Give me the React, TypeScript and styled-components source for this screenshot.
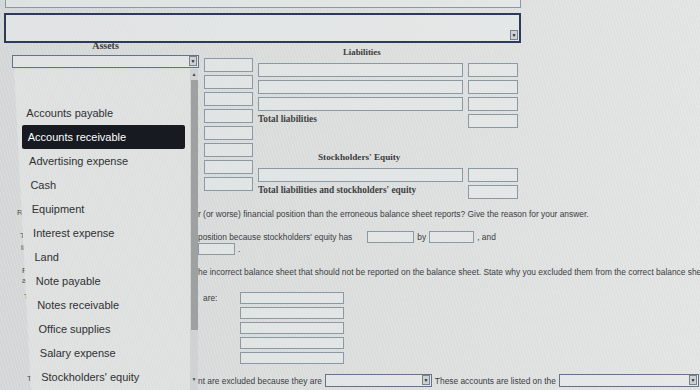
import styled, { createGlobalStyle } from 'styled-components'

const GlobalStyle = createGlobalStyle`
  html, body {
    margin: 0;
    padding: 0;
  }
  body {
    width: 700px;
    height: 390px;
    overflow: hidden;
    background: linear-gradient(90deg, #d3d6d6 0%, #d9dcdb 45%, #e1e3e2 100%);
    font-family: 'Liberation Sans', Arial, sans-serif;
    color: #35383a;
  }
`

const Page = styled.div`
  position: relative;
  width: 700px;
  height: 390px;
  overflow: hidden;
  box-sizing: border-box;
  padding-left: 4px;
  background-image: repeating-linear-gradient(
    74deg,
    rgba(255, 255, 255, 0.16) 0 1px,
    transparent 1px 3px
  );
`

const Field = styled.div<{ $w?: number; $h?: number }>`
  box-sizing: border-box;
  flex: none;
  width: ${(p) => p.$w ?? 50}px;
  height: ${(p) => p.$h ?? 14}px;
  border: 1px solid #8a99a3;
  background: rgba(232, 235, 235, 0.55);
`

const TopInput = styled(Field)`
  margin: -14px 0 0 1px;
`

const Select = styled.div<{ $w: number; $h: number; $thick?: boolean }>`
  box-sizing: border-box;
  flex: none;
  display: flex;
  justify-content: flex-end;
  align-items: flex-end;
  width: ${(p) => p.$w}px;
  height: ${(p) => p.$h}px;
  padding: 1px;
  border: ${(p) => (p.$thick ? '2px solid #2f3a5a' : '1px solid #66718a')};
  background: rgba(232, 235, 235, 0.6);
`

const TopSelect = styled(Select)`
  margin-top: 5px;
`

const Arrow = styled.span`
  box-sizing: border-box;
  width: 8px;
  height: 10px;
  display: flex;
  align-items: center;
  justify-content: center;
  background: #cdd1d4;
  border: 1px solid #7a8490;
  font-size: 5px;
  color: #1d1f22;
`

const Sheet = styled.div`
  display: grid;
  grid-template-columns: 187px 49px 261px;
  column-gap: 5px;
  margin-left: 8px;
  align-items: start;
`

const Column = styled.div`
  display: flex;
  flex-direction: column;
`

const ColHead = styled.div<{ $pad?: number; $top?: number; $size?: number; $h?: number }>`
  height: ${(p) => p.$h ?? 12}px;
  line-height: 11px;
  margin-top: ${(p) => p.$top ?? 0}px;
  padding-left: ${(p) => p.$pad ?? 0}px;
  text-align: ${(p) => (p.$pad === undefined ? 'center' : 'left')};
  font-family: 'Liberation Serif', 'Times New Roman', serif;
  font-weight: bold;
  font-size: ${(p) => p.$size ?? 9.2}px;
  color: #3a3c3e;
`

const Amounts = styled.div`
  display: flex;
  flex-direction: column;
  gap: 3px;
  padding-top: 15px;
`

const LiabRows = styled.div<{ $top: number }>`
  display: flex;
  flex-direction: column;
  gap: 3px;
  margin-top: ${(p) => p.$top}px;
`

const LiabRow = styled.div`
  display: flex;
  align-items: center;
  gap: 5px;
  height: 14px;
`

const TotalLabel = styled.span`
  width: 205px;
  margin-top: -4px;
  font-family: 'Liberation Serif', 'Times New Roman', serif;
  font-weight: bold;
  font-size: 9.3px;
  color: #3d3f41;
  white-space: nowrap;
`

const Questions = styled.div`
  display: flex;
  flex-direction: column;
  margin-top: 9px;
`

const QRow = styled.div<{ $top?: number }>`
  display: grid;
  grid-template-columns: 194px 1fr;
  align-items: start;
  margin-top: ${(p) => p.$top ?? 0}px;
`

const Lead = styled.div<{ $indent: number }>`
  padding-left: ${(p) => p.$indent}px;
  white-space: nowrap;
  font-size: 8px;
  line-height: 10px;
  color: #45484a;
`

const Body = styled.div`
  display: flex;
  align-items: center;
  gap: 3px;
  min-height: 12px;
  white-space: nowrap;
  font-size: 8.4px;
  color: #3a3d3f;
`

const Gap = styled.span<{ $w: number }>`
  width: ${(p) => p.$w}px;
  flex: none;
`

const AreLabel = styled.span`
  width: 39px;
  padding-left: 5px;
  box-sizing: border-box;
  align-self: flex-start;
  line-height: 12px;
`

const Stack = styled.div`
  display: flex;
  flex-direction: column;
  gap: 3px;
`

const DropList = styled.div`
  position: absolute;
  top: 69px;
  left: 14px;
  width: 184px;
  height: 321px;
  display: flex;
  background: #dde0df;
  background-image: repeating-linear-gradient(
    74deg,
    rgba(255, 255, 255, 0.14) 0 1px,
    transparent 1px 3px
  );
  clip-path: polygon(0 0, 100% 0, 100% 100%, 17px 100%);
`

const Options = styled.div`
  flex: 1;
  padding-top: 8px;
`

const Option = styled.div<{ $i: number; $active?: boolean }>`
  height: 24px;
  line-height: 24px;
  margin: 0 5px 0 8px;
  padding-left: ${(p) => 3 + p.$i * 1.35}px;
  border-radius: 2px;
  font-size: 11px;
  white-space: nowrap;
  color: ${(p) => (p.$active ? '#ffffff' : '#2f3133')};
  background: ${(p) => (p.$active ? '#171b21' : 'transparent')};
`

const Scroll = styled.div`
  width: 8px;
  display: flex;
  flex-direction: column;
  align-items: center;
  padding-bottom: 6px;
  background: #d0d3d3;
`

const ScrollBtn = styled.span`
  height: 10px;
  line-height: 10px;
  font-size: 5px;
  color: #4b4f53;
`

const Thumb = styled.div`
  width: 7px;
  height: 250px;
  margin-top: 1px;
  background: #9ea1a2;
`

const Spacer = styled.div`
  flex: 1;
`

const accounts = [
  '',
  'Accounts payable',
  'Accounts receivable',
  'Advertising expense',
  'Cash',
  'Equipment',
  'Interest expense',
  'Land',
  'Note payable',
  'Notes receivable',
  'Office supplies',
  'Salary expense',
  "Stockholders' equity",
]

const LiabLine = () => (
  <LiabRow>
    <Field $w={205} />
    <Field $w={50} />
  </LiabRow>
)

export default function App() {
  return (
    <Page>
      <GlobalStyle />
      <TopInput $w={516} $h={22} />
      <TopSelect $w={517} $h={30} $thick>
        <Arrow>▼</Arrow>
      </TopSelect>

      <Sheet>
        <Column>
          <ColHead $top={-3} $h={15} $size={10}>
            Assets
          </ColHead>
          <Select $w={187} $h={13}>
            <Arrow>▼</Arrow>
          </Select>
        </Column>

        <Amounts>
          {Array.from({ length: 8 }, (_, i) => (
            <Field key={i} $w={49} />
          ))}
        </Amounts>

        <Column>
          <ColHead $pad={85} $top={4} $size={8.8}>
            Liabilities
          </ColHead>
          <LiabRows $top={4}>
            <LiabLine />
            <LiabLine />
            <LiabLine />
            <LiabRow>
              <TotalLabel>Total liabilities</TotalLabel>
              <Field $w={50} />
            </LiabRow>
          </LiabRows>
          <ColHead $pad={60} $top={24}>
            Stockholders' Equity
          </ColHead>
          <LiabRows $top={4}>
            <LiabLine />
            <LiabRow>
              <TotalLabel>Total liabilities and stockholders' equity</TotalLabel>
              <Field $w={50} />
            </LiabRow>
          </LiabRows>
        </Column>
      </Sheet>

      <Questions>
        <QRow>
          <Lead $indent={13}>R</Lead>
          <Body>
            r (or worse) financial position than the erroneous balance sheet
            reports? Give the reason for your answer.
          </Body>
        </QRow>
        <QRow $top={11}>
          <Lead $indent={16}>T</Lead>
          <Body>
            position because stockholders' equity has
            <Gap $w={9} />
            <Field $w={47} $h={12} />
            <span>by</span>
            <Field $w={45} $h={12} />
            <span>, and</span>
          </Body>
        </QRow>
        <QRow>
          <Lead $indent={17}>ll</Lead>
          <Body>
            <Field $w={37} $h={12} />
            <span>.</span>
          </Body>
        </QRow>
        <QRow $top={11}>
          <Lead $indent={18}>
            R
            <br />a
          </Lead>
          <Body>
            he incorrect balance sheet that should not be reported on the
            balance sheet. State why you excluded them from the correct balance
            sheet.
          </Body>
        </QRow>
        <QRow $top={6}>
          <Lead $indent={20}>T</Lead>
          <Body>
            <AreLabel>are:</AreLabel>
            <Stack>
              {Array.from({ length: 5 }, (_, i) => (
                <Field key={i} $w={104} $h={12} />
              ))}
            </Stack>
          </Body>
        </QRow>
        <QRow $top={10}>
          <Lead $indent={23}>T</Lead>
          <Body>
            nt are excluded because they are
            <Select $w={107} $h={13}>
              <Arrow>▼</Arrow>
            </Select>
            These accounts are listed on the
            <Select $w={140} $h={13}>
              <Arrow>▼</Arrow>
            </Select>
          </Body>
        </QRow>
      </Questions>

      <DropList>
        <Options>
          {accounts.map((name, i) => (
            <Option key={i} $i={i} $active={name === 'Accounts receivable'}>
              {name}
            </Option>
          ))}
        </Options>
        <Scroll>
          <ScrollBtn>▲</ScrollBtn>
          <Thumb />
          <Spacer />
          <ScrollBtn>▼</ScrollBtn>
        </Scroll>
      </DropList>
    </Page>
  )
}
